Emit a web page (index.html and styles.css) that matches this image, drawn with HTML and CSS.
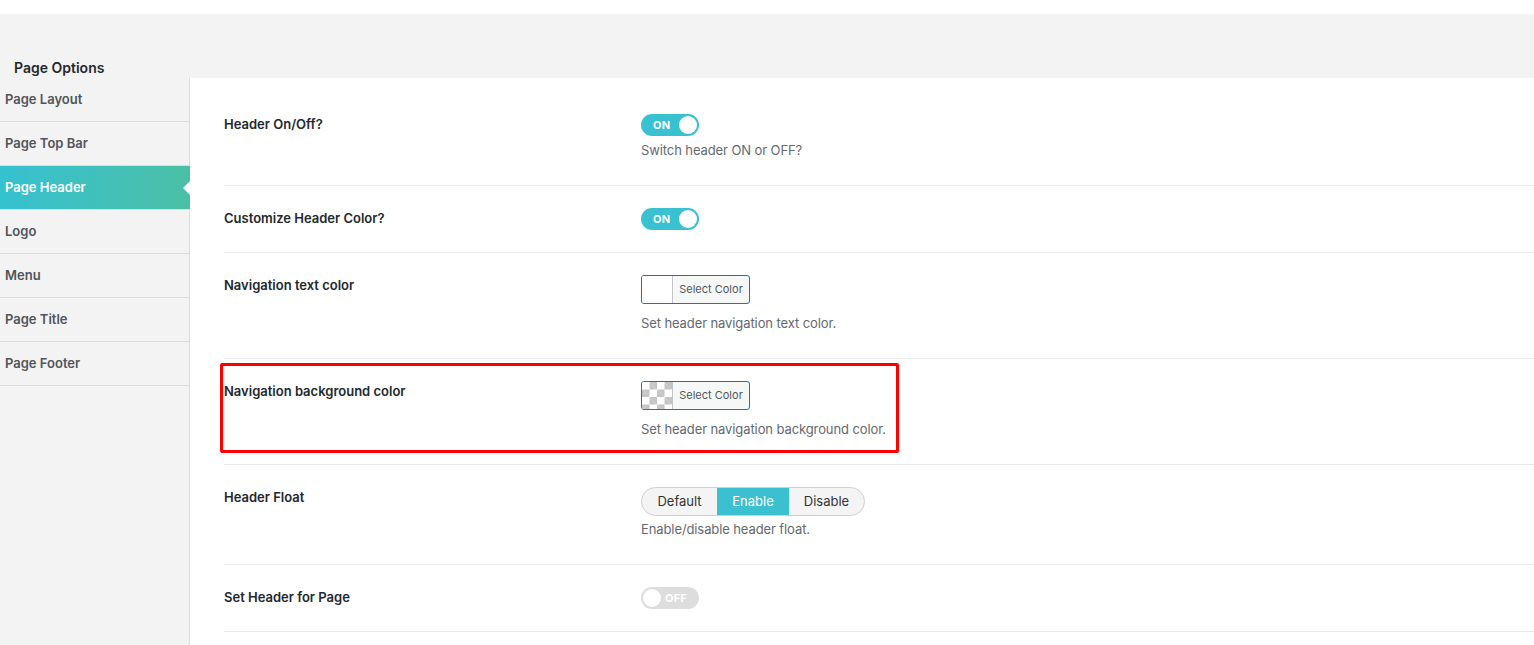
FILE: index.html
```html
<!DOCTYPE html>
<html>
<head>
<meta charset="utf-8">
<link rel="stylesheet" href="styles.css">
</head>
<body>
<div class="topbar"></div>
<div class="page">
  <h2 class="page-title">Page Options</h2>
  <div class="layout">
    <ul class="sidebar">
      <li>Page Layout</li>
      <li>Page Top Bar</li>
      <li class="active">Page Header</li>
      <li>Logo</li>
      <li>Menu</li>
      <li>Page Title</li>
      <li>Page Footer</li>
    </ul>
    <div class="content">
      <div class="row">
        <div class="label">Header On/Off?</div>
        <div class="field">
          <div class="toggle on"><span class="txt">ON</span><span class="knob"></span></div>
          <p class="desc">Switch header ON or OFF?</p>
        </div>
      </div>
      <div class="row">
        <div class="label">Customize Header Color?</div>
        <div class="field">
          <div class="toggle on"><span class="txt">ON</span><span class="knob"></span></div>
        </div>
      </div>
      <div class="row">
        <div class="label">Navigation text color</div>
        <div class="field">
          <div class="picker"><span class="swatch"></span><span class="ptext">Select Color</span></div>
          <p class="desc after-picker">Set header navigation text color.</p>
        </div>
      </div>
      <div class="row highlighted">
        <div class="label">Navigation background color</div>
        <div class="field">
          <div class="picker"><span class="swatch checker"></span><span class="ptext">Select Color</span></div>
          <p class="desc after-picker">Set header navigation background color.</p>
        </div>
        <div class="redbox"></div>
      </div>
      <div class="row">
        <div class="label">Header Float</div>
        <div class="field">
          <div class="btngroup"><span>Default</span><span class="sel">Enable</span><span>Disable</span></div>
          <p class="desc after-group">Enable/disable header float.</p>
        </div>
      </div>
      <div class="row">
        <div class="label">Set Header for Page</div>
        <div class="field">
          <div class="toggle off"><span class="knob"></span><span class="txt">OFF</span></div>
        </div>
      </div>
    </div>
  </div>
</div>
</body>
</html>
```
FILE: styles.css
```css
* { box-sizing: border-box; }
html, body { margin: 0; padding: 0; }
body {
  font-family: Inter, "Liberation Sans", sans-serif;
  background: #f3f3f3;
  color: #23282d;
  height: 645px;
  overflow: hidden;
}
.topbar { height: 14px; background: #fff; }
.page { background: #f3f3f3; }
.page-title {
  margin: 0;
  height: 64px;
  padding: 45px 0 0 14px;
  font-size: 14px;
  line-height: 18px;
  font-weight: 600;
  color: #23282d;
}
.layout { display: flex; align-items: stretch; height: 567px; overflow: hidden; }
.sidebar {
  list-style: none;
  margin: 0;
  padding: 0;
  width: 190px;
  flex: none;
  border-right: 1px solid #dcdcdc;
}
.sidebar li {
  height: 44px;
  line-height: 43px;
  padding-left: 5px;
  font-size: 13px;
  font-weight: 600;
  color: #50555a;
  border-bottom: 1px solid #dcdcdc;
  position: relative;
}
.sidebar li.active {
  background: linear-gradient(90deg, #36c1d0 0%, #4bbfa6 100%);
  color: #fff;
  margin-right: -1px;
}
.sidebar li.active::after {
  content: "";
  position: absolute;
  right: 0;
  top: 50%;
  margin-top: -7px;
  border-style: solid;
  border-width: 7px 7px 7px 0;
  border-color: transparent #fff transparent transparent;
}
.content {
  flex: 1;
  background: #fff;
  padding: 14px 0 0 34px;
}
.row {
  display: grid;
  grid-template-columns: 417px 1fr;
  padding: 22px 0;
  border-bottom: 1px solid #ebebeb;
  position: relative;
}
.label {
  font-size: 13px;
  line-height: 20px;
  font-weight: 600;
  color: #23282d;
}
.field { font-size: 13px; }
.desc {
  margin: 4px 0 3px;
  line-height: 20px;
  font-size: 13px;
  color: #646970;
  letter-spacing: -0.1px;
}
.desc.after-picker { margin-top: 9px; }
.desc.after-group { margin-top: 3px; }
.toggle {
  width: 58px;
  height: 22px;
  border-radius: 11px;
  display: flex;
  align-items: center;
  justify-content: space-between;
  padding: 0 2px 0 12px;
}
.toggle.on { background: #39c1d1; }
.toggle.off { background: #dddddd; padding: 0 12px 0 2px; }
.toggle .txt {
  color: #fff;
  font-size: 11px;
  font-weight: 700;
  letter-spacing: 0.2px;
}
.toggle .knob {
  width: 18px;
  height: 18px;
  border-radius: 50%;
  background: #fff;
}
.picker {
  display: flex;
  width: 109px;
  height: 29px;
  border: 1px solid #2271b1;
  border-radius: 3px;
  overflow: hidden;
  background: #f6f7f7;
}
.swatch {
  width: 31px;
  flex: none;
  background: #fff;
  border-right: 1px solid #c3c4c7;
}
.swatch.checker {
  background-color: #fff;
  background-image:
    linear-gradient(45deg, #c4c4c4 25%, transparent 25%, transparent 75%, #c4c4c4 75%),
    linear-gradient(45deg, #c4c4c4 25%, transparent 25%, transparent 75%, #c4c4c4 75%);
  background-size: 15px 15px;
  background-position: 0 0, 7.5px 7.5px;
}
.ptext {
  flex: 1;
  font-size: 11px;
  line-height: 27px;
  color: #50575e;
  text-align: center;
}
.btngroup {
  display: flex;
  width: fit-content;
  height: 29px;
  border: 1px solid #cfcfcf;
  border-radius: 15px;
  overflow: hidden;
  background: #f4f4f4;
}
.btngroup span {
  font-size: 13px;
  line-height: 27px;
  color: #333;
  text-align: center;
}
.btngroup span:nth-child(1) { width: 75px; }
.btngroup span:nth-child(2) { width: 72px; }
.btngroup span:nth-child(3) { width: 75px; }
.btngroup .sel { background: #3bc0d0; color: #fff; }
.redbox {
  position: absolute;
  left: -4px;
  top: 4px;
  width: 679px;
  height: 90px;
  border: 3px solid #ff0000;
  border-radius: 2px;
  pointer-events: none;
}
```
